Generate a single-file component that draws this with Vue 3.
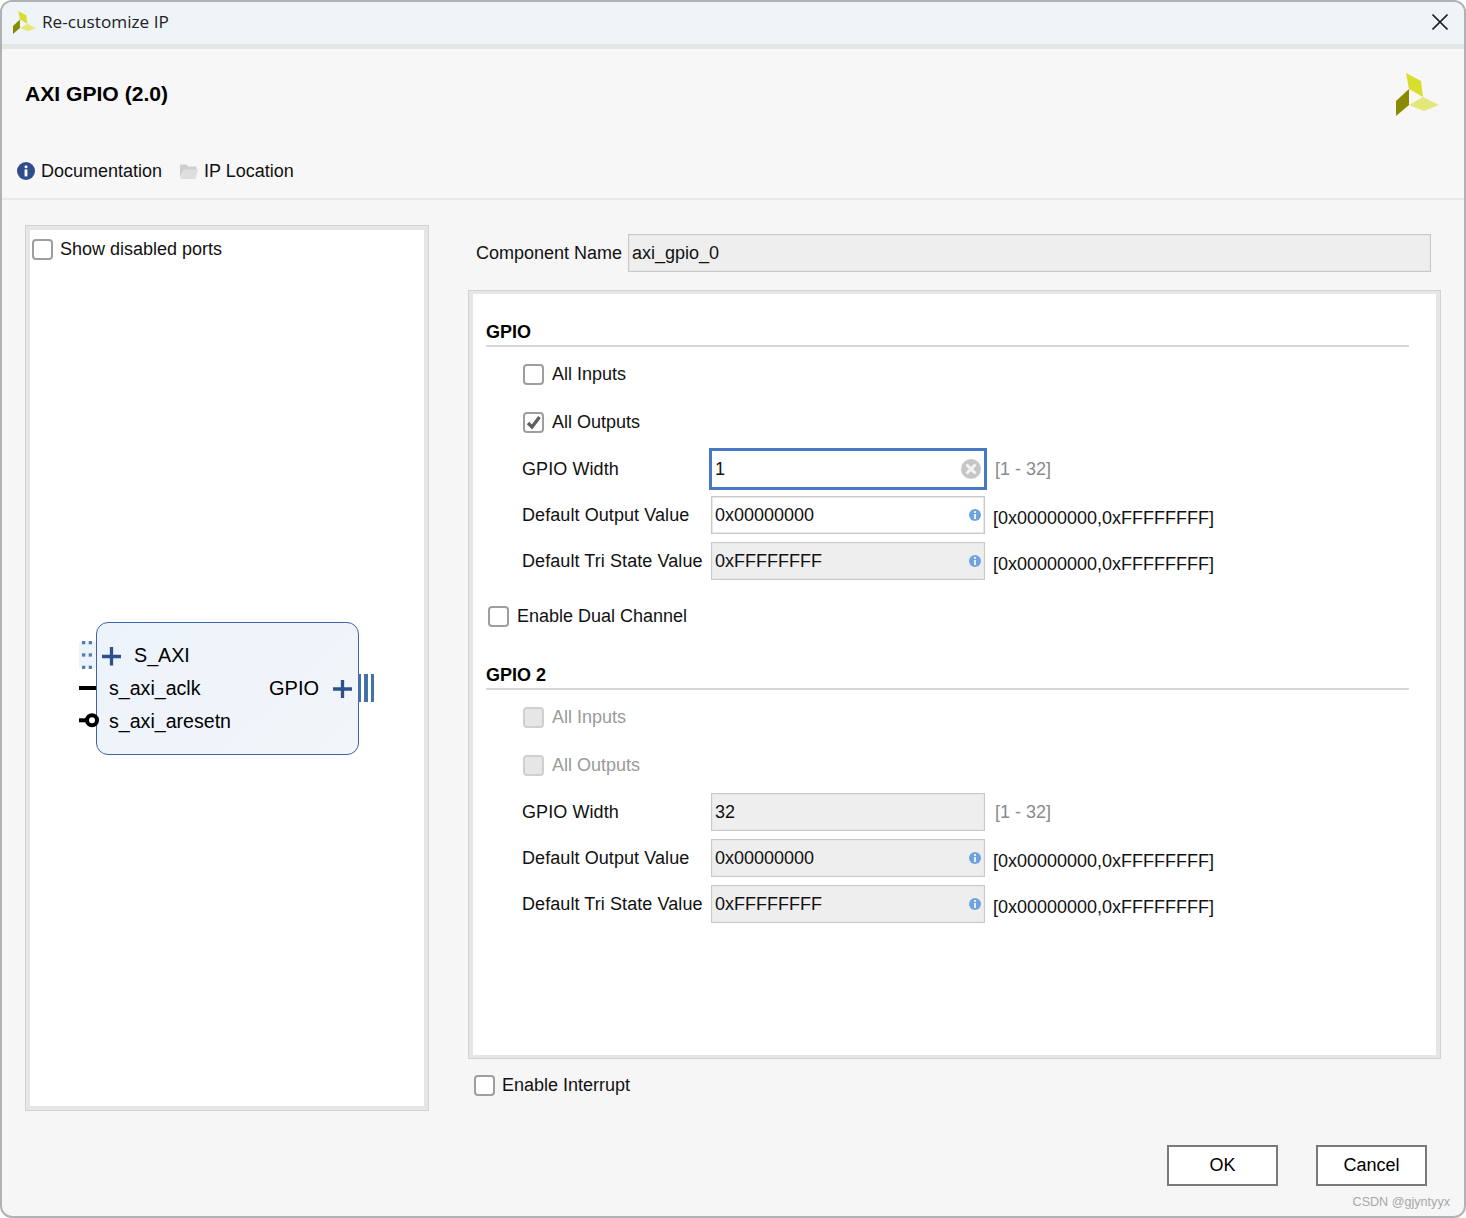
<script setup>
const sections = [
  {
    title: 'GPIO',
    disabled: false,
    checks: [
      { label: 'All Inputs', checked: false },
      { label: 'All Outputs', checked: true },
    ],
    fields: [
      { label: 'GPIO Width', value: '1', hint: '[1 - 32]', kind: 'focus' },
      { label: 'Default Output Value', value: '0x00000000', hint: '[0x00000000,0xFFFFFFFF]', kind: 'info' },
      { label: 'Default Tri State Value', value: '0xFFFFFFFF', hint: '[0x00000000,0xFFFFFFFF]', kind: 'info', off: true },
    ],
  },
  {
    title: 'GPIO 2',
    disabled: true,
    checks: [
      { label: 'All Inputs', checked: false },
      { label: 'All Outputs', checked: false },
    ],
    fields: [
      { label: 'GPIO Width', value: '32', hint: '[1 - 32]', kind: 'plain', off: true },
      { label: 'Default Output Value', value: '0x00000000', hint: '[0x00000000,0xFFFFFFFF]', kind: 'info', off: true },
      { label: 'Default Tri State Value', value: '0xFFFFFFFF', hint: '[0x00000000,0xFFFFFFFF]', kind: 'info', off: true },
    ],
  },
]
</script>

<template>
  <div class="window">
    <div class="titlebar">
      <svg class="logo-small" viewBox="0 0 43 43">
        <polygon points="10,0 25,8 27,24 13,16" fill="#d8de2e" />
        <polygon points="13,32 27,24 43,32 28,38" fill="#e4e87a" />
        <polygon points="0,28 13,16 13,32 0,43" fill="#8a8a00" />
      </svg>
      <span class="title-text">Re-customize IP</span>
      <svg class="close" viewBox="0 0 16 16">
        <path d="M0.5 0.5 L15.5 15.5 M15.5 0.5 L0.5 15.5" stroke="#222" stroke-width="1.6" fill="none" />
      </svg>
    </div>

    <div class="header">
      <div class="header-top">
        <h1 class="ip-name">AXI GPIO (2.0)</h1>
        <svg class="logo-big" viewBox="0 0 43 43">
          <polygon points="10,0 25,8 27,24 13,16" fill="#d8de2e" />
          <polygon points="13,32 27,24 43,32 28,38" fill="#e4e87a" />
          <polygon points="0,28 13,16 13,32 0,43" fill="#8a8a00" />
        </svg>
      </div>
      <div class="links">
        <span class="link">
          <svg class="link-icon" viewBox="0 0 18 18">
            <circle cx="9" cy="9" r="9" fill="#2f4d8a" />
            <circle cx="9" cy="4.8" r="1.5" fill="#fff" />
            <rect x="7.6" y="7.4" width="2.8" height="7" fill="#fff" />
          </svg>
          Documentation
        </span>
        <span class="link">
          <svg class="link-icon folder" viewBox="0 0 18 15">
            <path d="M0 0.500 H6.500 L8 2.500 H16.500 V6 H3.500 L0 14 Z" fill="#cfcfcf" />
            <path d="M3.500 5.500 H18 L15.500 15 H0.500 Z" fill="#dedede" />
          </svg>
          IP Location
        </span>
      </div>
    </div>

    <div class="main">
      <div class="left-panel">
        <div class="canvas">
          <label class="check canvas-check"><span class="box"></span>Show disabled ports</label>
          <div class="symbol">
            <svg class="ports" width="300" height="133" viewBox="-20 0 300 133">
              <rect x="-17" y="20" width="17" height="26" fill="#ecf3fa" />
              <g fill="#4f7fb5">
                <rect x="-14" y="19" width="3.300" height="3.300" /><rect x="-7.300" y="19" width="3.300" height="3.300" />
                <rect x="-14" y="31.300" width="3.300" height="3.300" /><rect x="-7.300" y="31.300" width="3.300" height="3.300" />
                <rect x="-14" y="43.700" width="3.300" height="3.300" /><rect x="-7.300" y="43.700" width="3.300" height="3.300" />
              </g>
              <path d="M6 34.500 H25 M15.500 25 V43.500" stroke="#2f4f8a" stroke-width="3.300" fill="none" />
              <path d="M-17 66 H0" stroke="#000" stroke-width="4" fill="none" />
              <path d="M-17 98.300 H-9" stroke="#000" stroke-width="4" fill="none" />
              <circle cx="-4" cy="98.300" r="5" stroke="#000" stroke-width="4" fill="#fff" />
              <path d="M237 67 H256 M246.500 58 V76" stroke="#2f4f8a" stroke-width="3.300" fill="none" />
              <g fill="#4472a8">
                <rect x="262" y="52" width="3" height="28" />
                <rect x="268" y="52" width="4" height="28" />
                <rect x="275" y="52" width="3" height="28" />
              </g>
            </svg>
            <span class="sym-text s-axi">S_AXI</span>
            <span class="sym-text sym-small s-clk">s_axi_aclk</span>
            <span class="sym-text sym-small s-rst">s_axi_aresetn</span>
            <span class="sym-text s-gpio">GPIO</span>
          </div>
        </div>
      </div>

      <div class="right">
        <div class="name-row">
          <span class="name-label">Component Name</span>
          <div class="input off name-input">axi_gpio_0</div>
        </div>

        <div class="panel">
          <div class="panel-inner">
            <template v-for="(s, i) in sections" :key="s.title">
              <h2 class="section-title" :class="{ second: i === 1 }">{{ s.title }}</h2>
              <div class="checks">
                <label v-for="c in s.checks" :key="c.label" class="check row-check" :class="{ disabled: s.disabled }">
                  <span class="box">
                    <svg v-if="c.checked" viewBox="0 0 17 17" class="tick">
                      <path d="M3 9 L7 13 L14.500 3" stroke="#5f5f5f" stroke-width="3.400" fill="none" />
                    </svg>
                  </span>
                  {{ c.label }}
                </label>
              </div>
              <div v-for="f in s.fields" :key="f.label" class="field">
                <span class="field-label">{{ f.label }}</span>
                <div class="input value" :class="{ off: f.off, focus: f.kind === 'focus' }">
                  <span>{{ f.value }}</span>
                  <svg v-if="f.kind === 'focus'" class="clear" viewBox="0 0 20 20">
                    <circle cx="10" cy="10" r="10" fill="#c6c6c6" />
                    <path d="M5.500 5.500 L14.500 14.500 M14.500 5.500 L5.500 14.500" stroke="#f4f4f4" stroke-width="3" />
                  </svg>
                  <svg v-if="f.kind === 'info'" class="info" viewBox="0 0 12 12">
                    <circle cx="6" cy="6" r="6" fill="#6fa3e0" />
                    <rect x="5" y="2" width="2" height="2" fill="#e6f0fb" />
                    <rect x="5" y="5" width="2" height="5" fill="#e6f0fb" />
                  </svg>
                </div>
                <span v-if="f.hint === '[1 - 32]'" class="hint-short">{{ f.hint }}</span>
                <span v-else class="hint-long">{{ f.hint }}</span>
              </div>
              <label v-if="i === 0" class="check dual-check"><span class="box"></span>Enable Dual Channel</label>
            </template>
          </div>
        </div>

        <label class="check interrupt"><span class="box"></span>Enable Interrupt</label>
      </div>
    </div>

    <div class="footer">
      <button class="btn">OK</button>
      <button class="btn">Cancel</button>
    </div>
    <span class="watermark">CSDN @gjyntyyx</span>
  </div>
</template>

<style>
html, body { margin: 0; background: #fff; }
</style>

<style scoped>
* { box-sizing: border-box; }
.window {
  position: relative;
  width: 1466px;
  height: 1218px;
  border: 2px solid #b2b2b2;
  border-radius: 12px;
  background: #f6f6f6;
  overflow: hidden;
  font-family: "Liberation Sans", Arial, sans-serif;
  font-size: 18px;
  color: #111;
}
.titlebar {
  height: 42px;
  background: #eff4f9;
  display: flex;
  align-items: center;
  padding: 0 16px 0 11px;
}
.logo-small { width: 23px; height: 23px; margin-right: 6px; margin-top: -2px; }
.title-text { font-family: "Open Sans", sans-serif; font-size: 17.200px; color: #222; margin-top: -3px; }
.close { width: 16px; height: 16px; margin-left: auto; margin-top: -2px; }
.header {
  height: 156px;
  border-top: 5px solid #e6e6e6;
  border-bottom: 2px solid #e9e9e9;
  background: #f7f7f7;
  display: flex;
  flex-direction: column;
}
.header-top {
  height: 90px;
  display: flex;
  align-items: center;
  justify-content: space-between;
  padding: 0 25px 0 23px;
}
.ip-name { margin: 0; font-size: 21.100px; font-weight: bold; color: #000; }
.logo-big { width: 43px; height: 43px; }
.links { display: flex; gap: 18px; padding-left: 15px; height: 34px; margin-top: 15px; align-items: center; }
.link { display: flex; align-items: center; gap: 6px; }
.link-icon { width: 18px; height: 18px; }
.folder { height: 15px; }
.main {
  display: flex;
  padding: 25px 25px 0 23px;
  gap: 39px;
}
.left-panel {
  width: 404px;
  height: 886px;
  border: 1px solid #d2d2d2;
  background: #e6e6e6;
  padding: 4px;
  flex: none;
}
.canvas {
  position: relative;
  width: 100%;
  height: 100%;
  background: #fff;
}
.check { display: flex; align-items: center; gap: 8px; }
.box {
  width: 21px;
  height: 21px;
  border: 2px solid #9e9e9e;
  border-radius: 4px;
  background: #fff;
  display: flex;
  align-items: center;
  justify-content: center;
  flex: none;
}
.tick { width: 17px; height: 17px; }
.canvas-check { padding: 8px 0 0 2px; height: 30px; gap: 7px; }
.symbol {
  position: absolute;
  left: 66px;
  top: 392px;
  width: 263px;
  height: 133px;
  border: 1px solid #3c64a8;
  border-radius: 12px;
  background: linear-gradient(135deg, #edf3fb, #f2f5f9);
}
.ports { position: absolute; left: -21px; top: -1px; overflow: visible; }
.sym-text { position: absolute; font-size: 20px; line-height: 24px; color: #000; white-space: nowrap; }
.sym-small { font-size: 19.600px; }
.s-axi { left: 37px; top: 20px; font-size: 19.700px; }
.s-clk { left: 12px; top: 53px; }
.s-rst { left: 12px; top: 86px; }
.s-gpio { left: 172px; top: 53px; }
.right { width: 973px; flex: none; padding-top: 9px; }
.name-row { display: flex; align-items: center; padding-left: 8px; gap: 6px; height: 38px; }
.name-label { width: 146px; flex: none; white-space: nowrap; }
.input {
  height: 38px;
  border: 1px solid #c8c8c8;
  box-shadow: inset 0 0 0 1px #e8e8e8;
  background: #fff;
  padding: 0 3px;
  display: flex;
  align-items: center;
  justify-content: space-between;
  color: #111;
}
.input.off { background: #eeeeee; }
.name-input { width: 803px; }
.panel {
  margin-top: 18px;
  height: 769px;
  border: 1px solid #d2d2d2;
  background: #e6e6e6;
  padding: 3px 4px;
}
.panel-inner {
  height: 100%;
  background: #fff;
  padding: 0 27px 0 13px;
}
.section-title {
  margin: 0;
  height: 53px;
  padding-top: 28px;
  border-bottom: 2px solid #d6d6d6;
  font-size: 18px;
  line-height: 20px;
  font-weight: bold;
  color: #000;
}
.section-title.second { height: 50px; padding-top: 25px; }
.checks { padding-top: 3px; }
.row-check { height: 48px; padding-left: 37px; }
.row-check.disabled { color: #9a9a9a; }
.row-check.disabled .box { background: #e6e6e6; border-color: #cfcfcf; }
.field { display: flex; align-items: center; height: 46px; padding-left: 36px; }
.field-label { width: 189px; flex: none; white-space: nowrap; letter-spacing: 0.08px; }
.value { width: 274px; flex: none; }
.value.focus { outline: 2px solid #4a78c8; border-color: #4a78c8; box-shadow: none; }
.clear { width: 20px; height: 20px; }
.info { width: 12px; height: 12px; }
.hint-short { margin-left: 10px; color: #8a8a8a; }
.hint-long { margin-left: 8px; padding-top: 6px; color: #111; }
.dual-check { height: 48px; margin-top: 8px; padding-left: 2px; }
.interrupt { height: 52px; padding-left: 6px; gap: 7px; }
.footer {
  display: flex;
  justify-content: flex-end;
  gap: 38px;
  padding-right: 37px;
  margin-top: 34px;
}
.btn {
  width: 111px;
  height: 41px;
  border: 2px solid #7a7a7a;
  background: #fff;
  font: inherit;
  color: #000;
  padding: 0;
}
.watermark {
  position: absolute;
  right: 14px;
  bottom: 7px;
  font-size: 12.600px;
  color: #a8a8a8;
}
</style>
